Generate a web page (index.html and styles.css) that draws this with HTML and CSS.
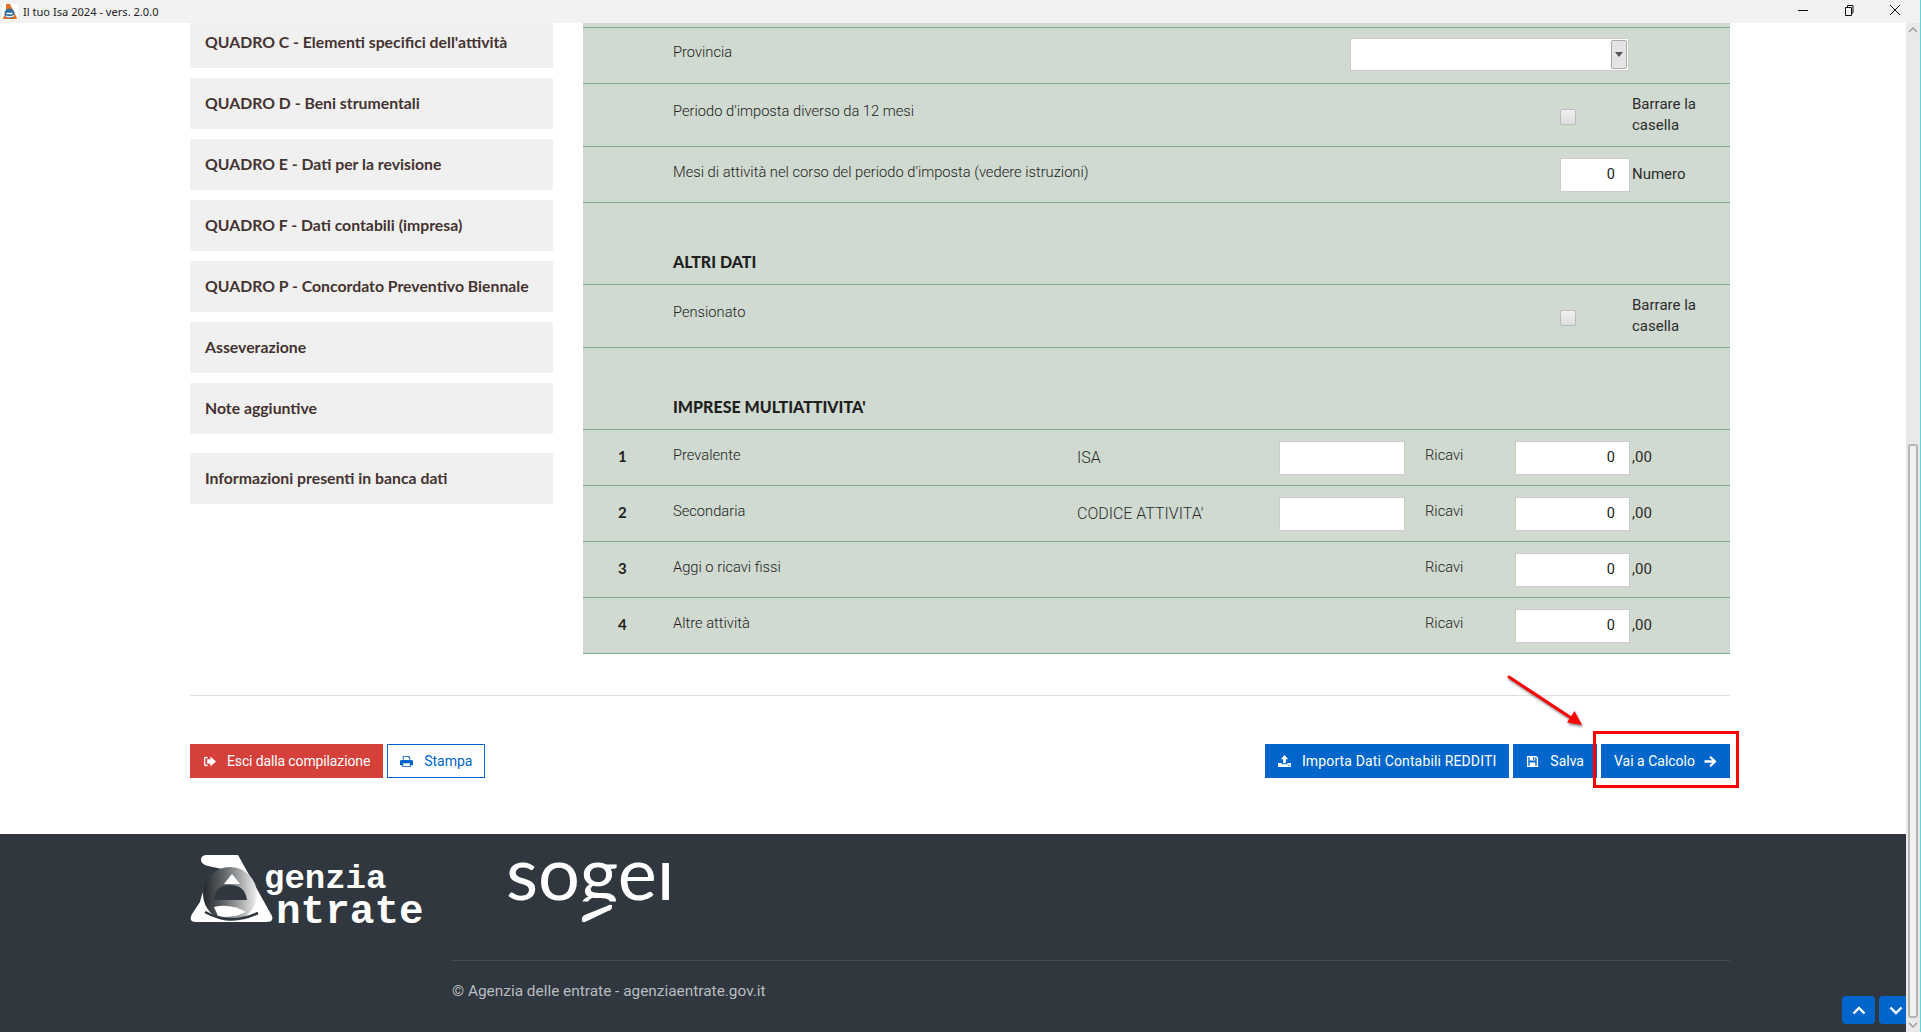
FILE: index.html
```html
<!DOCTYPE html>
<html lang="it">
<head>
<meta charset="utf-8">
<title>Il tuo Isa 2024 - vers. 2.0.0</title>
<link rel="stylesheet" href="styles.css">
</head>
<body>
<div class="window">
  <header class="titlebar">
    <svg class="app-icon" viewBox="0 0 16 16">
      <rect width="16" height="16" fill="#fff"/>
      <path d="M4 0h4l7 14q0 1-1 1H1q-1 0 0-1l3-5z" fill="#e8701e"/>
      <circle cx="7.500" cy="9.500" r="5" fill="#2f6f9f"/>
      <path d="M4.500 9.500h6M4 12q4 2 8-.5" stroke="#fff" stroke-width="1.300" fill="none"/>
    </svg>
    <span class="app-title">Il tuo Isa 2024 - vers. 2.0.0</span>
    <div class="win-controls">
      <svg class="win-btn" viewBox="0 0 12 12"><path d="M1 6.500h10" stroke="#111" stroke-width="1"/></svg>
      <svg class="win-btn" viewBox="0 0 12 12"><path d="M2.500 3.500h6v8h-6zM4.500 3.500v-2h5.500v7.500h-1.500" stroke="#111" stroke-width="1" fill="none"/></svg>
      <svg class="win-btn" viewBox="0 0 12 12"><path d="M1 1l10 10M11 1L1 11" stroke="#111" stroke-width="1"/></svg>
    </div>
  </header>

  <div class="viewport">
    <div class="page">
      <div class="content">
        <nav class="sidebar">
          <a class="side-item">QUADRO C - Elementi specifici dell'attività</a>
          <a class="side-item">QUADRO D - Beni strumentali</a>
          <a class="side-item">QUADRO E - Dati per la revisione</a>
          <a class="side-item">QUADRO F - Dati contabili (impresa)</a>
          <a class="side-item">QUADRO P - Concordato Preventivo Biennale</a>
          <a class="side-item">Asseverazione</a>
          <a class="side-item">Note aggiuntive</a>
          <a class="side-item side-item-last">Informazioni presenti in banca dati</a>
        </nav>

        <section class="panel">
          <div class="row row-top row-first">
            <span class="label col-label">Provincia</span>
            <div class="select">
              <span class="select-btn"><svg viewBox="0 0 8 5"><path d="M0 0h8L4 5z" fill="#555"/></svg></span>
            </div>
          </div>
          <div class="row row-top h63">
            <span class="label col-label">Periodo d'imposta diverso da 12 mesi</span>
            <span class="check"></span>
            <span class="unit col-unit">Barrare la casella</span>
          </div>
          <div class="row row-top h56">
            <span class="label col-label">Mesi di attività nel corso del periodo d'imposta (vedere istruzioni)</span>
            <input class="field field-short" value="0" readonly>
            <span class="unit col-unit">Numero</span>
          </div>
          <div class="row-title h82">ALTRI DATI</div>
          <div class="row row-top h63">
            <span class="label col-label">Pensionato</span>
            <span class="check"></span>
            <span class="unit col-unit">Barrare la casella</span>
          </div>
          <div class="row-title h82">IMPRESE MULTIATTIVITA'</div>

          <div class="row row-multi h56">
            <b class="num">1</b>
            <span class="label">Prevalente</span>
            <span class="unit code-label">ISA</span>
            <input class="field" readonly>
            <span class="label col-ricavi">Ricavi</span>
            <input class="field col-amount" value="0" readonly>
            <span class="unit">,00</span>
          </div>
          <div class="row row-multi h56">
            <b class="num">2</b>
            <span class="label">Secondaria</span>
            <span class="unit code-label">CODICE ATTIVITA'</span>
            <input class="field" readonly>
            <span class="label col-ricavi">Ricavi</span>
            <input class="field col-amount" value="0" readonly>
            <span class="unit">,00</span>
          </div>
          <div class="row row-multi h56">
            <b class="num">3</b>
            <span class="label">Aggi o ricavi fissi</span>
            <span class="label col-ricavi">Ricavi</span>
            <input class="field col-amount" value="0" readonly>
            <span class="unit">,00</span>
          </div>
          <div class="row row-multi h56">
            <b class="num">4</b>
            <span class="label">Altre attività</span>
            <span class="label col-ricavi">Ricavi</span>
            <input class="field col-amount" value="0" readonly>
            <span class="unit">,00</span>
          </div>
        </section>
      </div>

      <hr class="divider">

      <div class="actions">
        <div class="btn-group">
          <button class="btn btn-danger btn-tight">
            <svg class="ico" viewBox="0 0 14 14"><path d="M5 2H3a2 2 0 0 0-2 2v6a2 2 0 0 0 2 2h2v-1.500H3a.5.5 0 0 1-.5-.5V4a.5.5 0 0 1 .5-.5h2z" fill="currentColor"/><path d="M8 1.500l6 5.500-6 5.500V9.500H4.500v-5H8z" fill="currentColor"/></svg>
            Esci dalla compilazione
          </button>
          <button class="btn btn-outline">
            <svg class="ico" viewBox="0 0 14 14"><path d="M3 1h6.500L11 2.500V5H3zM4 2v3h6V3H9V2zM1.500 5.500h11q1.500 0 1.500 1.500v4h-2.500v2h-9v-2H0V7q0-1.500 1.500-1.500zM3.500 9v3h7V9z" fill="currentColor" fill-rule="evenodd"/></svg>
            Stampa
          </button>
        </div>
        <div class="btn-group">
          <button class="btn btn-primary btn-loose">
            <svg class="ico" viewBox="0 0 14 14"><path d="M7 0l4 4.500H8.500V9h-3V4.500H3zM0 8.500h4V10h6V8.500h4V13H0z" fill="currentColor"/><path d="M10.500 11h1M12.300 11h1" stroke="#06c" stroke-width="1"/></svg>
            Importa Dati Contabili REDDITI
          </button>
          <button class="btn btn-primary">
            <svg class="ico" viewBox="0 0 14 14"><path d="M1 1h10l2 2v10H1zM2.500 2.500v9h9V3.600L10.400 2.500H10V6H4V2.500zM7.500 2.500V5H9V2.500zM4 8h6v3.500H4z" fill="currentColor" fill-rule="evenodd"/></svg>
            Salva
          </button>
          <div class="marked">
            <button class="btn btn-primary btn-next">
              Vai a Calcolo
              <svg class="ico" viewBox="0 0 14 14"><path d="M7.500 1L13.500 7l-6 6-1.700-1.700 3-3H.5V5.700h8.300l-3-3z" fill="currentColor"/></svg>
            </button>
            <span class="mark-box"></span>
            <svg class="mark-arrow" viewBox="0 0 80 55"><path d="M3 3L66 44.500" stroke="#f00" stroke-width="3" stroke-linecap="round"/><path d="M76 51L61 48.500 68.500 37z" fill="#f00"/></svg>
          </div>
        </div>
      </div>

      <footer class="footer">
        <div class="logos">
          <svg class="logo-ae" viewBox="0 0 232 70">
            <defs>
              <linearGradient id="eg" x1="0" x2="1" y1="0" y2="0">
                <stop offset="0" stop-color="#23282d"/>
                <stop offset="0.35" stop-color="#5a5f63"/>
                <stop offset="0.7" stop-color="#a8aaac"/>
                <stop offset="1" stop-color="#f0f0f0"/>
              </linearGradient>
            </defs>
            <path d="M17 1H48L82 62Q84 68 76 68H6Q-2 68 2 60L10 48Q14 28 32 15L18 12Q11 10 11 6Q11 1 17 1Z" fill="#fff"/>
            <circle cx="40" cy="40" r="27" fill="url(#eg)"/>
            <path d="M42 20L50 30H34Z" fill="#fff"/>
            <path d="M24 46Q25 31 40 31Q55 31 57 46Z" fill="#30373e"/>
            <path d="M24 53Q40 49 56 58Q42 65 28 62Z" fill="#fff"/>
            <path d="M15 58Q40 72 68 59" stroke="#30373e" stroke-width="2.500" fill="none"/>
            <text class="logo-line logo-line-a" x="74" y="34">genzia</text>
            <text class="logo-line logo-line-b" x="86" y="69">ntrate</text>
          </svg>
          <svg class="logo-sogei" viewBox="0 0 165 60">
            <text class="sogei-text" x="-1" y="37">sogeı</text>
            <rect class="logo-mask" y="38.500" width="165" height="22"/>
            <path d="M105 42Q106 47 101 48L78 59Q74 60 75 55Q76 52 80 51L100 43Q103 41 105 42Z" fill="#fff"/>
          </svg>
        </div>
        <div class="copyright">© Agenzia delle entrate - agenziaentrate.gov.it</div>
      </footer>

      <div class="scroll-btns">
        <span class="scroll-btn"><svg viewBox="0 0 14 9"><path d="M1.500 7.500L7 2l5.500 5.500" stroke="#fff" stroke-width="2.400" fill="none"/></svg></span>
        <span class="scroll-btn"><svg viewBox="0 0 14 9"><path d="M1.500 1.500L7 7l5.500-5.500" stroke="#fff" stroke-width="2.400" fill="none"/></svg></span>
      </div>
    </div>

    <aside class="scrollbar">
      <svg class="sb-arrow" viewBox="0 0 14 14"><path d="M3 9l4-4 4 4" stroke="#999" stroke-width="1.400" fill="none"/></svg>
      <div class="sb-thumb"></div>
      <svg class="sb-arrow" viewBox="0 0 14 14"><path d="M3 5l4 4 4-4" stroke="#999" stroke-width="1.400" fill="none"/></svg>
    </aside>
  </div>
</div>
</body>
</html>
```

FILE: styles.css
```css
* { box-sizing: border-box; }
html, body { margin: 0; height: 100%; overflow: hidden; background: #fff; }
body { font-family: "Roboto", "Liberation Sans", sans-serif; color: #222; }

.window { display: flex; flex-direction: column; width: 1921px; height: 1032px; border-right: 1px solid #63d3da; }

.titlebar { display: flex; align-items: center; height: 23px; flex: none; background: #f2f2f2; padding-left: 2px; }
.app-icon { width: 16px; height: 16px; }
.app-title { margin-left: 5px; font: 11.1px/23px "Noto Sans", sans-serif; color: #222; }
.win-controls { margin: -3px 0 0 auto; display: flex; gap: 34px; padding-right: 19px; }
.win-btn { width: 12px; height: 12px; display: block; }

.viewport { display: flex; flex: 1; min-height: 0; }
.page { position: relative; flex: 1; min-width: 0; overflow: hidden; padding-left: 190px; }

.content { display: flex; gap: 30px; height: 631px; width: 1540px; }

.sidebar { display: flex; flex-direction: column; gap: 10px; width: 363px; flex: none; margin-top: -6px; }
.side-item { display: flex; align-items: center; height: 51px; padding: 0 0 3px 15px; background: #f0f0f0; color: #443331; font-family: "Lato", sans-serif; font-size: 15.8px; font-weight: 700; }
.side-item-last { margin-top: 9px; }

.panel { flex: 1; background: #d0dad0; padding-top: 4px; }

.row, .row-title { border-bottom: 1px solid #7aa98f; }
.row-first { height: 57px; border-top: 1px solid #7aa98f; }
.h56 { height: 56px; }
.h63 { height: 63px; }
.h82 { height: 82px; }

.row { display: grid; align-items: center; font-size: 14.7px; }
.row-top { grid-template-columns: 90px 677px 210px 70px 1fr; }
.row-top .col-label { grid-column: 2; }
.row-top .select { grid-column: 3 / span 2; }
.row-top .check, .row-top .field-short { grid-column: 4; }
.row-top .col-unit { grid-column: 5; }
.row-multi { grid-template-columns: 90px 404px 202px 126px 20px 90px 115px 1fr; }
.row-multi .num { grid-column: 1; }
.row-multi .col-ricavi { grid-column: 6; }
.row-multi .col-amount { grid-column: 7; }

.label { align-self: start; padding-top: 15px; line-height: 21px; font-weight: 300; color: #222; }
.row-first .label { padding-top: 14px; }
.h63 .label { padding-top: 17px; }
.unit { font-size: 15px; line-height: 21px; font-weight: 400; color: #2c2c2c; padding-left: 2px; }
.unit.code-label { padding-left: 0; font-size: 16px; font-weight: 300; }
.num { padding: 0 0 3px 35px; font-family: "Lato", sans-serif; font-size: 15px; font-weight: 700; color: #222; }

.row-title { display: flex; align-items: flex-end; padding: 0 0 12px 90px; font-family: "Lato", sans-serif; font-size: 16px; line-height: 21px; font-weight: 900; color: #1f1f1f; }

.select { position: relative; height: 33px; width: 279px; margin-top: -2px; background: #fff; border: 1px solid #ccc; }
.select-btn { position: absolute; top: 1px; right: 1px; bottom: 1px; width: 16px; display: flex; align-items: center; justify-content: center; background: #e4e4e4; border: 1px solid #aaa; border-radius: 2px; }
.select-btn svg { width: 8px; height: 5px; }

.check { width: 16px; height: 16px; margin-top: 3px; background: linear-gradient(#f0f0f0, #dedede); border: 1px solid #bbb; border-radius: 2px; }

.field { width: 100%; height: 34px; padding: 0 14px 0 0; border: 1px solid #ccc; background: #fff; text-align: right; font: 400 14.5px "Roboto", sans-serif; color: #222; outline: none; }
.field-short { width: 70px; }

.divider { margin: 41px 0 0; width: 1540px; height: 1px; border: 0; background: #ddd; }

.actions { display: flex; justify-content: space-between; width: 1540px; margin-top: 48px; }
.btn-group { display: flex; gap: 4px; }
.btn { display: flex; align-items: center; gap: 11px; height: 34px; padding: 0 12px; border: 1px solid transparent; font: 400 14px "Roboto", sans-serif; white-space: nowrap; }
.btn-danger { background: #d5403b; color: #fff; }
.btn-outline { background: #fff; color: #06c; border-color: #06c; }
.btn-primary { background: #06c; color: #fff; }
.btn-tight { letter-spacing: -.13px; }
.btn-loose { letter-spacing: .14px; }
.btn-next { gap: 9px; }
.ico { width: 13px; height: 13px; flex: none; }

.marked { position: relative; }
.mark-box { position: absolute; top: -13px; right: -9px; bottom: -10px; left: -8px; border: 3px solid #f00; pointer-events: none; }
.mark-arrow { position: absolute; left: -95px; top: -70px; width: 80px; height: 55px; filter: drop-shadow(1px 2px 1px rgba(0,0,0,.45)); }

.footer { margin: 56px 0 0 -190px; padding: 20px 176px 0 190px; height: 198px; width: 1906px; background: #30373e; }
.logos { display: flex; height: 106px; }
.logo-ae { width: 232px; height: 70px; flex: none; overflow: visible; }
.logo-line { font-family: "Liberation Mono", monospace; font-weight: 700; fill: #fff; }
.logo-line-a { font-size: 34px; }
.logo-line-b { font-size: 41px; }
.logo-sogei { width: 165px; height: 60px; margin: 9px 0 0 85px; flex: none; overflow: visible; }
.sogei-text { font-family: "Lato", sans-serif; font-size: 74px; font-weight: 400; fill: #fff; }
.logo-mask { fill: #30373e; }
.copyright { margin-left: 262px; padding-top: 20px; border-top: 1px solid #454c53; font: 400 15.4px/21px "Roboto", sans-serif; color: #b9bdc1; }

.scroll-btns { position: absolute; right: -6px; bottom: 8px; display: flex; gap: 4px; }
.scroll-btn { display: flex; align-items: center; justify-content: center; width: 33px; height: 28px; background: #06c; border-radius: 4px; }
.scroll-btn svg { width: 14px; height: 9px; }

.scrollbar { display: flex; flex-direction: column; justify-content: space-between; width: 14px; flex: none; background: #e9e9e9; }
.sb-arrow { width: 14px; height: 14px; flex: none; }
.sb-thumb { height: 575px; width: 10px; margin: 407px 0 0 2px; background: #f2f2f2; border: 2px solid #b5b5b5; border-radius: 3px; }
```
